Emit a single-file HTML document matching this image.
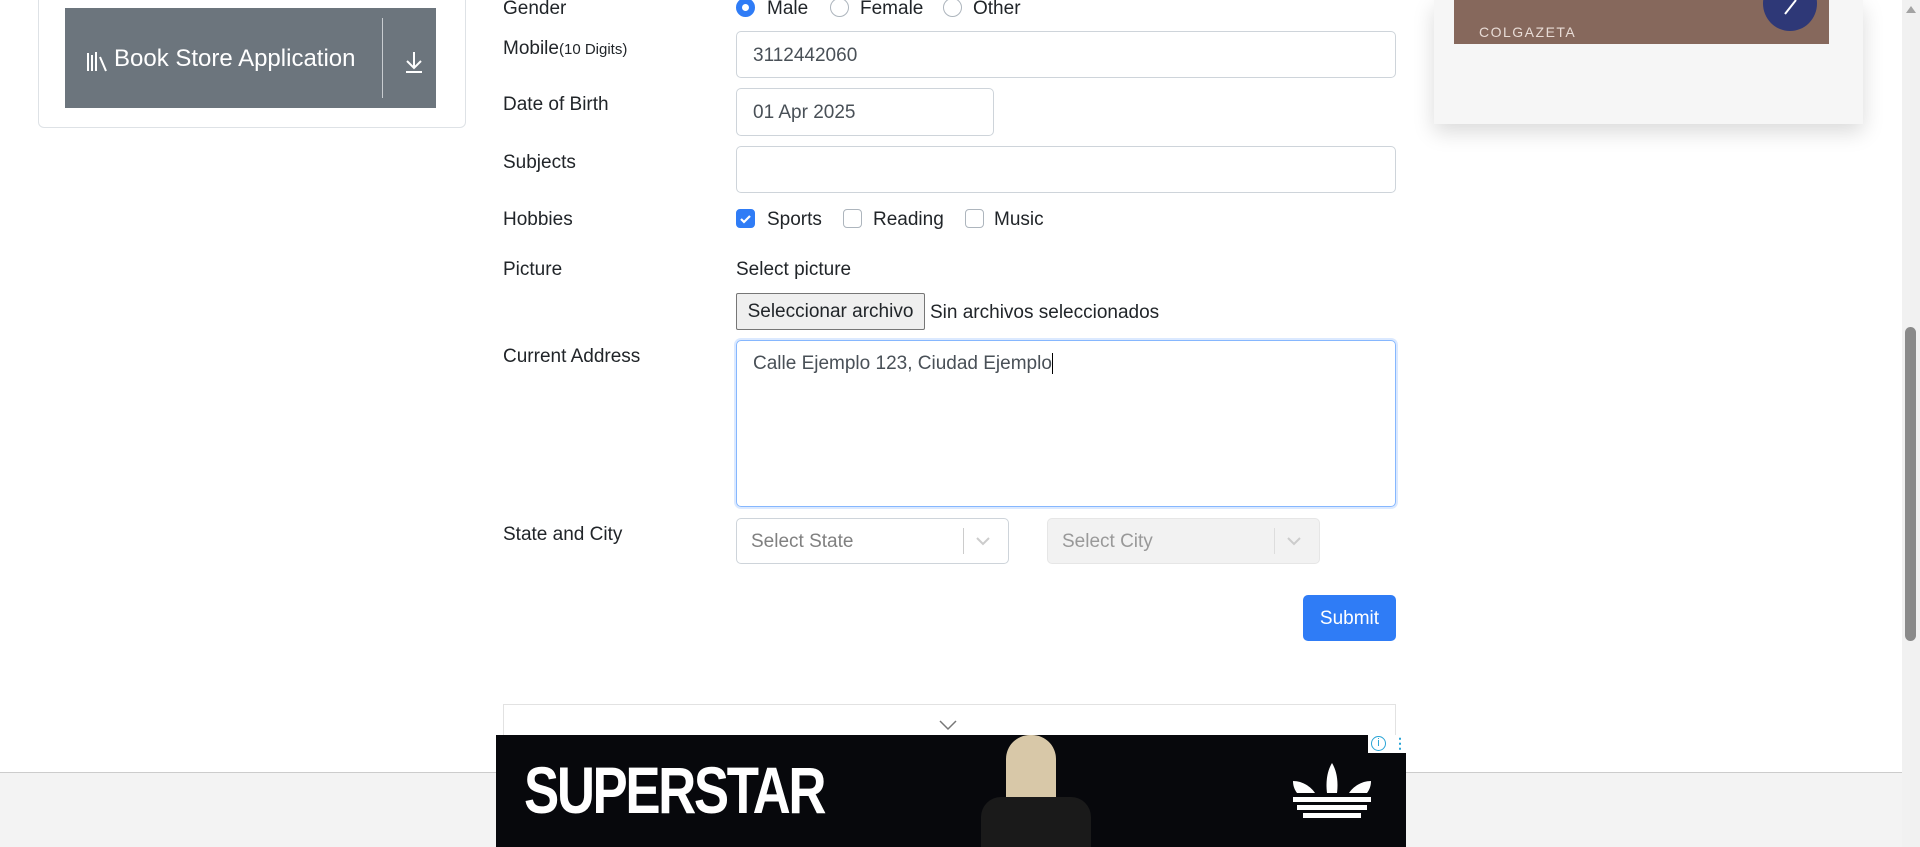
<!DOCTYPE html>
<html><head><meta charset="utf-8"><style>
*{box-sizing:border-box;margin:0;padding:0}
body{width:1920px;height:847px;overflow:hidden;background:#fff;font-family:"Liberation Sans",sans-serif;color:#212529;position:relative}
.a{position:absolute}
.lbl{position:absolute;left:503px;font-size:19px;line-height:24px}
.inp{position:absolute;border:1px solid #ced4da;border-radius:5px;background:#fff;font-size:19px;color:#495057;padding-left:16px;display:flex;align-items:center;padding-top:2px}
.txt{position:absolute;font-size:19px;line-height:24px}
.radio{position:absolute;width:19px;height:19px;border:1px solid #adb5bd;border-radius:50%;background:#fff}
.cb{position:absolute;width:19px;height:19px;border:1px solid #adb5bd;border-radius:4px;background:#fff}
</style></head><body>

<!-- left card -->
<div class="a" style="left:38px;top:-10px;width:428px;height:138px;border:1px solid #dee2e6;border-radius:6px"></div>
<div class="a" style="left:65px;top:8px;width:371px;height:100px;background:#6c757d"></div>
<div class="a" style="left:382px;top:18px;width:1px;height:80px;background:#c8ccd0"></div>
<svg class="a" style="left:86px;top:50px" width="22" height="22" viewBox="0 0 22 22"><g stroke="#fff" stroke-width="2" fill="none"><path d="M2 3v18M6 5v16M10 2v19M14 7l6 14"/></g></svg>
<div class="a" style="left:114px;top:44px;font-size:24px;color:#fff;line-height:30px">Book Store Application</div>
<svg class="a" style="left:403px;top:50px" width="22" height="24" viewBox="0 0 22 24"><g stroke="#fff" stroke-width="2" fill="none"><path d="M11 2v15M4 11l7 7 7-7M3 22h16"/></g></svg>

<!-- labels -->
<div class="lbl" style="top:-3px">Gender</div>
<div class="lbl" style="top:37px">Mobile<span style="font-size:15px">(10 Digits)</span></div>
<div class="lbl" style="top:93px">Date of Birth</div>
<div class="lbl" style="top:151px">Subjects</div>
<div class="lbl" style="top:208px">Hobbies</div>
<div class="lbl" style="top:258px">Picture</div>
<div class="lbl" style="top:345px">Current Address</div>
<div class="lbl" style="top:523px">State and City</div>

<!-- gender -->
<div class="radio" style="left:736px;top:-2px;border:6px solid #2f7cf6"></div>
<div class="txt" style="left:767px;top:-3px">Male</div>
<div class="radio" style="left:830px;top:-2px"></div>
<div class="txt" style="left:860px;top:-3px">Female</div>
<div class="radio" style="left:943px;top:-2px"></div>
<div class="txt" style="left:973px;top:-3px">Other</div>

<div class="inp" style="left:736px;top:31px;width:660px;height:47px">3112442060</div>
<div class="inp" style="left:736px;top:88px;width:258px;height:48px">01 Apr 2025</div>
<div class="inp" style="left:736px;top:146px;width:660px;height:47px"></div>

<!-- hobbies -->
<div class="cb" style="left:736px;top:209px;background:#2f7cf6;border-color:#2f7cf6"><svg width="17" height="17" viewBox="0 0 17 17"><path d="M4 9l3 3 6-6" stroke="#fff" stroke-width="2.2" fill="none"/></svg></div>
<div class="txt" style="left:767px;top:208px">Sports</div>
<div class="cb" style="left:843px;top:209px"></div>
<div class="txt" style="left:873px;top:208px">Reading</div>
<div class="cb" style="left:965px;top:209px"></div>
<div class="txt" style="left:994px;top:208px">Music</div>

<div class="txt" style="left:736px;top:258px">Select picture</div>
<div class="a" style="left:736px;top:293px;width:189px;height:37px;border:1px solid #767676;border-radius:2px;background:#efefef;font-size:19px;text-align:center;line-height:36px">Seleccionar archivo</div>
<div class="txt" style="left:930px;top:301px">Sin archivos seleccionados</div>

<div class="a" style="left:736px;top:340px;width:660px;height:167px;border:1px solid #86b7fe;border-radius:5px;box-shadow:0 0 0 2px rgba(13,110,253,.15);font-size:19px;color:#495057;padding:12px 16px">Calle Ejemplo 123, Ciudad Ejemplo<span style="border-left:1px solid #000"></span></div>

<!-- selects -->
<div class="inp" style="left:736px;top:518px;width:273px;height:46px;color:#808080;padding-left:14px">Select State</div>
<div class="a" style="left:963px;top:528px;width:1px;height:26px;background:#ccc"></div>
<svg class="a" style="left:975px;top:535px" width="16" height="12" viewBox="0 0 16 12"><path d="M2 3l6 6 6-6" stroke="#ccc" stroke-width="2" fill="none"/></svg>
<div class="inp" style="left:1047px;top:518px;width:273px;height:46px;background:#f2f2f2;border-color:#e6e6e6;color:#999;padding-left:14px">Select City</div>
<div class="a" style="left:1274px;top:528px;width:1px;height:26px;background:#ddd"></div>
<svg class="a" style="left:1286px;top:535px" width="16" height="12" viewBox="0 0 16 12"><path d="M2 3l6 6 6-6" stroke="#ccc" stroke-width="2" fill="none"/></svg>

<div class="a" style="left:1303px;top:595px;width:93px;height:46px;background:#2f7cf6;border-radius:5px;color:#fff;font-size:19px;text-align:center;line-height:48px">Submit</div>

<!-- accordion -->
<div class="a" style="left:503px;top:704px;width:893px;height:100px;border:1px solid #e2e2e2"></div>
<svg class="a" style="left:938px;top:719px" width="20" height="12" viewBox="0 0 20 12"><path d="M2 2l8 8 8-8" stroke="#777" stroke-width="1.5" fill="none"/></svg>

<!-- footer gray -->
<div class="a" style="left:0;top:772px;width:1902px;height:75px;background:#f3f3f3;border-top:1px solid #ccc"></div>

<!-- ad -->
<div class="a" style="left:496px;top:735px;width:910px;height:112px;background:#07080c;overflow:hidden">
 <div class="a" style="left:28px;top:22px;color:#fff;font-weight:bold;font-size:66px;line-height:66px;letter-spacing:-3px;transform:scaleX(.8);transform-origin:left">SUPERSTAR</div>
 <div class="a" style="left:510px;top:0;width:50px;height:112px;background:#d8c8a8;border-radius:24px 24px 0 0"></div>
 <div class="a" style="left:485px;top:62px;width:110px;height:60px;background:#1a1a1a;border-radius:20px 20px 0 0"></div>
 <svg class="a" style="left:795px;top:28px" width="82" height="58" viewBox="0 0 82 58"><g fill="#fff"><path d="M41 0c6 10 6 22 5 30H36c-1-8-1-20 5-30z"/><path d="M2 18c10 0 18 6 22 12H6C3 26 2 22 2 18z"/><path d="M80 18c-10 0-18 6-22 12h18c3-4 4-8 4-12z"/><rect x="2" y="34" width="78" height="5"/><rect x="6" y="42" width="70" height="5"/><rect x="12" y="50" width="58" height="5"/></g></svg>
 <div class="a" style="left:872px;top:0;width:38px;height:18px;background:#fff"></div>
 <div class="a" style="left:875px;top:1px;width:15px;height:15px;border:1.5px solid #29a4d6;border-radius:50%;color:#29a4d6;font-size:11px;text-align:center;line-height:12px">i</div>
 <div class="a" style="left:897px;top:1px;color:#29a4d6;font-size:14px;line-height:14px;font-weight:bold">⋮</div>
</div>

<!-- right ad -->
<div class="a" style="left:1434px;top:0;width:429px;height:124px;background:#f6f6f6;box-shadow:0 8px 20px rgba(0,0,0,.15)"></div>
<div class="a" style="left:1454px;top:0;width:375px;height:44px;background:#86685c"></div>
<div class="a" style="left:1479px;top:24px;color:#e8dcd6;font-size:14px;letter-spacing:1.5px">COLGAZETA</div>
<div class="a" style="left:1763px;top:-24px;width:54px;height:55px;border-radius:50%;background:#2e3877"></div>
<svg class="a" style="left:1782px;top:0" width="20" height="16" viewBox="0 0 20 16"><path d="M3 14L14 0" stroke="#fff" stroke-width="2"/></svg>

<!-- scrollbar -->
<div class="a" style="left:1902px;top:0;width:18px;height:847px;background:#f1f1f1"></div>
<svg class="a" style="left:1905px;top:5px" width="12" height="9" viewBox="0 0 12 9"><path d="M6 1l5 7H1z" fill="#a3a3a3"/></svg>
<div class="a" style="left:1905px;top:327px;width:11px;height:314px;background:#8a8a8a;border-radius:6px"></div>
</body></html>
